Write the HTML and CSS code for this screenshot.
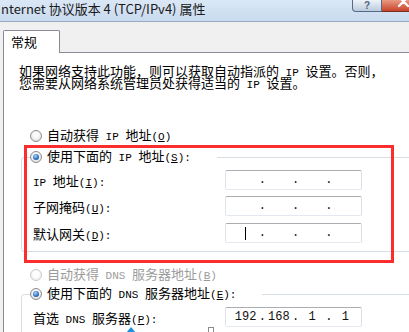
FILE: index.html
```html
<!DOCTYPE html>
<html><head>
  <meta charset="utf-8">
  <title>Internet 协议版本 4 (TCP/IPv4) 属性</title>
<link rel="stylesheet" href="styles.css">
</head>
<body>
<div class="titlebar">
 <div class="title">nternet 协议版本 4 (TCP/IPv4) 属性</div>
 <div class="btn-help">?</div>
 <div class="btn-close">
  <svg width="27" height="12" viewBox="0 0 27 12"><path d="M17 -3 L26 6 M26 -3 L17 6" stroke="#fff" stroke-width="2.2" stroke-linecap="round" fill="none"/></svg>
 </div>
</div><!-- titlebar -->

<div class="dialog">
 <div class="tabs">
  <div class="tab">常规</div>
 </div>
 <div class="panel">
  <div class="intro">
   <div class="ln">如果网络支持此功能，则可以获取自动指派的<span class="en"> IP </span>设置。否则，</div>
   <div class="ln">您需要从网络系统管理员处获得适当的<span class="en"> IP </span>设置。</div>
  </div>

  <div class="opt first"><span class="radio"></span><span class="txt">自动获得<span class="en"> IP </span>地址<span class="en">(<u>O</u>)</span></span></div>

  <fieldset class="grp">
   <legend class="opt ipcap"><span class="radio on"></span><span class="txt">使用下面的<span class="en"> IP </span>地址<span class="en">(<u>S</u>):</span></span></legend>
   <div class="field">
    <label class="fname"><span class="en">IP </span>地址<span class="en">(<u>I</u>):</span></label>
    <div class="ip"><span class="oct"></span><span class="dot">.</span><span class="oct"></span><span class="dot">.</span><span class="oct"></span><span class="dot">.</span><span class="oct"></span></div>
   </div>
   <div class="field">
    <label class="fname">子网掩码<span class="en">(<u>U</u>):</span></label>
    <div class="ip"><span class="oct"></span><span class="dot">.</span><span class="oct"></span><span class="dot">.</span><span class="oct"></span><span class="dot">.</span><span class="oct"></span></div>
   </div>
   <div class="field last">
    <label class="fname">默认网关<span class="en">(<u>D</u>):</span></label>
    <div class="ip"><span class="oct"><span class="caret"></span></span><span class="dot">.</span><span class="oct"></span><span class="dot">.</span><span class="oct"></span><span class="dot">.</span><span class="oct"></span></div>
   </div>
  </fieldset>

  <div class="opt dis"><span class="radio off"></span><span class="txt">自动获得<span class="en"> DNS </span>服务器地址<span class="en">(<u>B</u>)</span></span></div>

  <fieldset class="grp dns">
   <legend class="opt dnscap"><span class="radio on"></span><span class="txt">使用下面的<span class="en"> DNS </span>服务器地址<span class="en">(<u>E</u>):</span></span></legend>
   <div class="field">
    <label class="fname">首选<span class="en"> DNS </span>服务器<span class="en">(<u>P</u>):</span></label>
    <div class="ip"><span class="oct">192</span><span class="dot">.</span><span class="oct">168</span><span class="dot">.</span><span class="oct">1</span><span class="dot">.</span><span class="oct">1</span></div>
   </div>
  </fieldset>
 </div><!-- panel -->
</div><!-- dialog -->

<!-- annotations over the screenshot -->
<div class="redbox"></div>
<div class="arrowtip"></div>
<div class="boxmark"></div>
</body></html>
```

FILE: styles.css
```css
*{
  box-sizing: border-box;
}
body{
  margin: 0;
  width: 409px;
  height: 332px;
  overflow: hidden;
  position: relative;
  background-color: #f0f0f0;
  font-family: "Noto Sans CJK SC", sans-serif;
  font-size: 13px;
  color: #000;
}
.en{
  font-family: "Liberation Mono", monospace;
  font-size: 11px;
}

/* title bar */
.titlebar{
  display: flex;
  align-items: flex-start;
  height: 22px;
  border-bottom: 1px solid #97a9bf;
  background: linear-gradient(#dae7f5, #c9dbef);
}
.title{
  flex: 1;
  padding-left: 1px;
  line-height: 17px;
  font-size: 13px;
  color: #1a1a1a;
  white-space: nowrap;
}
.btn-help{
  flex: 0 0 30px;
  height: 12px;
  border: 1px solid #536a88;
  border-top: none;
  border-radius: 0 0 0 4px;
  background: linear-gradient(#eef3f9, #bccbdd);
  font: bold 10px "Liberation Sans", sans-serif;
  line-height: 11px;
  color: #4f6482;
  text-align: center;
}
.btn-close{
  flex: 0 0 27px;
  height: 12px;
  border-bottom: 1px solid #7b2e20;
  background: linear-gradient(#ea9a83, #c6442a);
}
.btn-close svg{
  display: block;
}

/* tabs */
.dialog{
  padding-left: 3px;
}
.tabs{
  display: flex;
  padding-top: 8px;
}
.tab{
  position: relative;
  z-index: 1;
  width: 57px;
  height: 23px;
  margin-bottom: -1px;
  padding-left: 7px;
  border: 1px solid #898c95;
  border-bottom: none;
  border-radius: 2px 2px 0 0;
  background-color: #fff;
  line-height: 21px;
}
.panel{
  height: 290px;
  border-left: 1px solid #898c95;
  border-top: 1px solid #898c95;
  background-color: #fff;
}
.intro{
  margin-top: 12px;
  padding-left: 15px;
}
.ln{
  height: 12px;
  line-height: 12px;
  white-space: pre;
}

/* radio rows */
.opt{
  display: flex;
  align-items: center;
  height: 14px;
  line-height: 14px;
  white-space: nowrap;
}
.opt .txt{
  white-space: pre;
}
.opt.first{
  margin-top: 40px;
  padding-left: 26px;
}
.opt.dis{
  margin-top: 16px;
  padding-left: 26px;
  color: #9b9b9b;
}
.radio{
  display: flex;
  align-items: center;
  justify-content: center;
  flex-shrink: 0;
  width: 12px;
  height: 12px;
  margin-right: 5px;
  border: 1px solid #8c8c8c;
  border-radius: 50%;
  background: radial-gradient(circle at 50% 40%, #fafafa 30%, #d6d6d6 100%);
}
.radio.on::after{
  content: "";
  width: 6px;
  height: 6px;
  border-radius: 50%;
  background: radial-gradient(circle at 40% 35%, #a6d6fb, #2a6cbc 60%, #143f78);
}
.radio.off{
  border-color: #c8c8c8;
  background: radial-gradient(circle at 50% 40%, #fdfdfd 30%, #ebebeb 100%);
}

/* group boxes */
fieldset.grp{
  width: 400px;
  margin: 7px 0 0 17px;
  padding: 0 0 8px 8px;
  border: 1px solid #d5dfe5;
  border-radius: 3px;
}
fieldset.grp.dns{
  margin-top: 5px;
}
legend.opt{
  padding: 0;
}
legend.ipcap{
  width: 187px;
}
legend.dnscap{
  width: 232px;
}
.field{
  display: flex;
  align-items: center;
  height: 20px;
  margin: 6px 0 0 3px;
}
.field.last{
  margin-top: 7px;
}
.fname{
  width: 192px;
  white-space: pre;
}

/* ip address boxes */
.ip{
  display: flex;
  align-items: center;
  width: 137px;
  height: 20px;
  padding-left: 4px;
  border: 1px solid;
  border-color: #abadb3 #dbdfe6 #e3e9ef #e2e3ea;
  border-radius: 2px;
  background-color: #fff;
  font-family: "Liberation Mono", monospace;
  font-size: 12px;
  line-height: 18px;
  color: #111;
}
.oct{
  display: flex;
  justify-content: center;
  align-items: center;
  width: 32px;
  height: 18px;
}
.dot{
  width: 2px;
  display: flex;
  justify-content: center;
}
.caret{
  width: 1px;
  height: 13px;
  background-color: #000;
}

/* annotation marks */
.redbox{
  position: absolute;
  left: 24px;
  top: 145px;
  width: 370px;
  height: 118px;
  border: 3px solid #fb2d2d;
}
.arrowtip{
  position: absolute;
  left: 126px;
  top: 327px;
  width: 0;
  height: 0;
  border-left: 5px solid transparent;
  border-right: 5px solid transparent;
  border-bottom: 6px solid #1b8fe3;
}
.boxmark{
  position: absolute;
  left: 208px;
  top: 327px;
  width: 6px;
  height: 6px;
  border: 1px solid #8a8a8a;
}
```
